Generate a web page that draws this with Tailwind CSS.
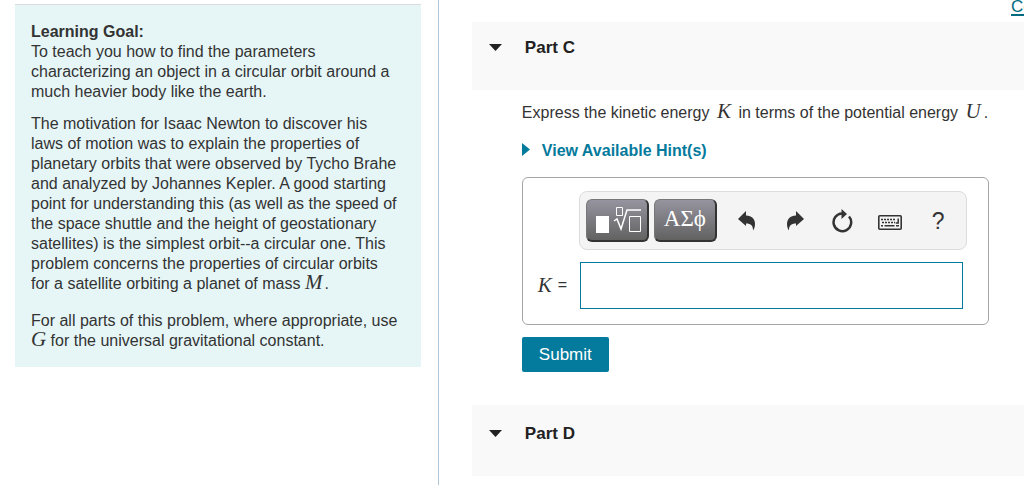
<!DOCTYPE html>
<html lang="en">
<head>
    <meta charset="UTF-8">
    <meta name="viewport" content="width=device-width, initial-scale=1.0">
    <title>Circular Orbits</title>
    <script src="https://cdn.jsdelivr.net/npm/@tailwindcss/browser@4"></script>
</head>
<body class="bg-white font-['Liberation_Sans',Arial,sans-serif] text-base leading-5 text-[#333] overflow-x-hidden">
    <div class="flex min-h-screen overflow-hidden">
        <!-- Problem introduction -->
        <aside class="w-3/7 shrink-0 border-r border-[#b0c4d8] pt-1 pl-[15px] pr-[17px]">
            <div class="bg-[#e6f6f7] border-t border-[#d8dcdc] px-4 pt-[17px] pb-4">
                <h2 class="font-bold">Learning Goal:</h2>
                <p class="mb-3">To teach you how to find the parameters characterizing an object in a circular orbit around a much heavier body like the earth.</p>
                <p class="mb-[17px]">The motivation for Isaac Newton to discover his<br>laws of motion was to explain the properties of<br>planetary orbits that were observed by Tycho Brahe<br>and analyzed by Johannes Kepler. A good starting<br>point for understanding this (as well as the speed of<br>the space shuttle and the height of geostationary<br>satellites) is the simplest orbit--a circular one. This<br>problem concerns the properties of circular orbits<br>for a satellite orbiting a planet of mass <i class="mr-0.5 font-['Liberation_Serif',serif] text-[21px] leading-3">M</i>.</p>
                <p>For all parts of this problem, where appropriate, use <i class="font-['Liberation_Serif',serif] text-[21px] leading-3">G</i> for the universal gravitational constant.</p>
            </div>
        </aside>

        <!-- Problem parts -->
        <main class="flex-1 min-w-0 pl-[33px]">
            <div class="h-[22px] flex justify-end">
                <a href="#" class="w-[13px] -mt-[3px] whitespace-nowrap text-[17px] text-[#006a80] underline decoration-2 underline-offset-2">Constants</a>
            </div>

            <section>
                <header class="bg-[#f9f9f9] px-4 pt-4 pb-8">
                    <button class="flex items-center gap-[22px] text-[17px] leading-5 font-bold text-[#222]">
                        <svg class="w-[15px] h-2" viewBox="0 0 15 8" fill="#222"><path d="M1 0h13L7.500 7z"/></svg>
                        Part C
                    </button>
                </header>
                <div class="pl-[50px] pr-[35px] pt-[13px]">
                    <p class="whitespace-nowrap">Express the kinetic energy <i class="mx-[3px] font-['Liberation_Serif',serif] text-[21px] leading-3">K</i> in terms of the potential energy <i class="mx-[3px] font-['Liberation_Serif',serif] text-[21px] leading-3">U</i>.</p>
                    <button class="mt-[18px] flex items-center gap-3 font-bold text-[#047a9c]">
                        <svg class="-mt-1 w-2 h-[13px]" viewBox="0 0 8 13" fill="#047a9c"><path d="M0 0L8 6.500L0 13z"/></svg>
                        View Available Hint(s)
                    </button>

                    <div class="mt-4 rounded-md border border-[#a5a5a5] pl-[15px] pr-[21px] pt-[13px] pb-[15px]">
                        <div class="ml-[41px] flex items-center rounded-lg border border-[#dcdcdc] bg-[#f4f4f4] pl-1.5 py-[7px]">
                            <button aria-label="Templates" class="h-[43px] w-[63px] shrink-0 rounded-md border border-b-2 border-r-2 border-[#777] border-b-[#333] border-r-[#333] bg-linear-to-b from-[#96949f] to-[#626262] flex items-center justify-center">
                                <svg class="w-12 h-7" viewBox="0 0 48 28" fill="none" stroke="#fff">
                                    <path d="M3 10h13v17H3z" fill="#fff" stroke="none"/>
                                    <path d="M23.500 1.500h6v8h-6zM36.500 10.500h11v15h-11z"/>
                                    <path d="M21 15l3-2 4 10 6-19h14" stroke-width="1.500"/>
                                </svg>
                            </button>
                            <button class="ml-[5px] h-[43px] w-[63px] shrink-0 rounded-md border border-b-2 border-r-2 border-[#777] border-b-[#333] border-r-[#333] bg-linear-to-b from-[#96949f] to-[#626262] pb-0.5 font-['Liberation_Serif',serif] text-[23px] leading-5 text-white">ΑΣϕ</button>
                            <div class="grid flex-1 grid-cols-5 items-center justify-items-center pl-1.5 pr-1">
                                <button aria-label="Undo">
                                    <svg class="w-[18px] h-5" viewBox="0 0 18 20" fill="#333"><path d="M0 8L8 0v4.500C14 5 17 8 17 13c0 3-.8 5-2 6.500.2-4.500-2-7-7-7V15z"/></svg>
                                </button>
                                <button aria-label="Redo">
                                    <svg class="w-[18px] h-5" viewBox="0 0 18 20" fill="#333"><path d="M18 8L10 0v4.500C4 5 1 8 1 13c0 3 .8 5 2 6.500-.2-4.500 2-7 7-7V15z"/></svg>
                                </button>
                                <button aria-label="Reset">
                                    <svg class="w-[22px] h-6" viewBox="0 0 22 24"><path d="M11 4.500a8.800 8.800 0 1 0 7 3" fill="none" stroke="#333" stroke-width="2.500"/><path d="M10.500 0l5.500 5-5.500 5z" fill="#333"/></svg>
                                </button>
                                <button aria-label="Keyboard shortcuts">
                                    <svg class="mt-1 w-6 h-[15px]" viewBox="0 0 24 15" fill="none" stroke="#333"><rect x=".8" y=".8" width="22.400" height="13.400" rx="1" stroke-width="1.600"/><path d="M3 4.500h15M4 7.500h13" stroke-width="1.500" stroke-dasharray="2 1"/><path d="M3 10.800h2M6.500 10.800h10M18 10.800h3M20.200 3.500v4.500h-2.500" stroke-width="1.500"/></svg>
                                </button>
                                <button aria-label="Help" class="w-6 text-[23px] leading-5">?</button>
                            </div>
                        </div>
                        <div class="mt-3 flex items-center pr-1">
                            <label for="answer" class="flex w-[42px] shrink-0 items-center gap-1.5 pb-0.5"><i class="font-['Liberation_Serif',serif] text-[21px]">K</i><span>=</span></label>
                            <input id="answer" type="text" class="h-[47px] min-w-0 flex-1 border border-[#047a9c] bg-white px-2 outline-none">
                        </div>
                    </div>

                    <button class="mt-3 h-[35px] rounded-xs bg-[#047a9c] px-[17px] text-[17px] text-white">Submit</button>
                </div>
            </section>

            <section class="mt-[33px]">
                <header class="bg-[#f9f9f9] px-4 pt-[19px] pb-8">
                    <button class="flex items-center gap-[22px] text-[17px] leading-5 font-bold text-[#222]">
                        <svg class="w-[15px] h-2" viewBox="0 0 15 8" fill="#222"><path d="M1 0h13L7.500 7z"/></svg>
                        Part D
                    </button>
                </header>
            </section>
        </main>
    </div>
</body>
</html>
